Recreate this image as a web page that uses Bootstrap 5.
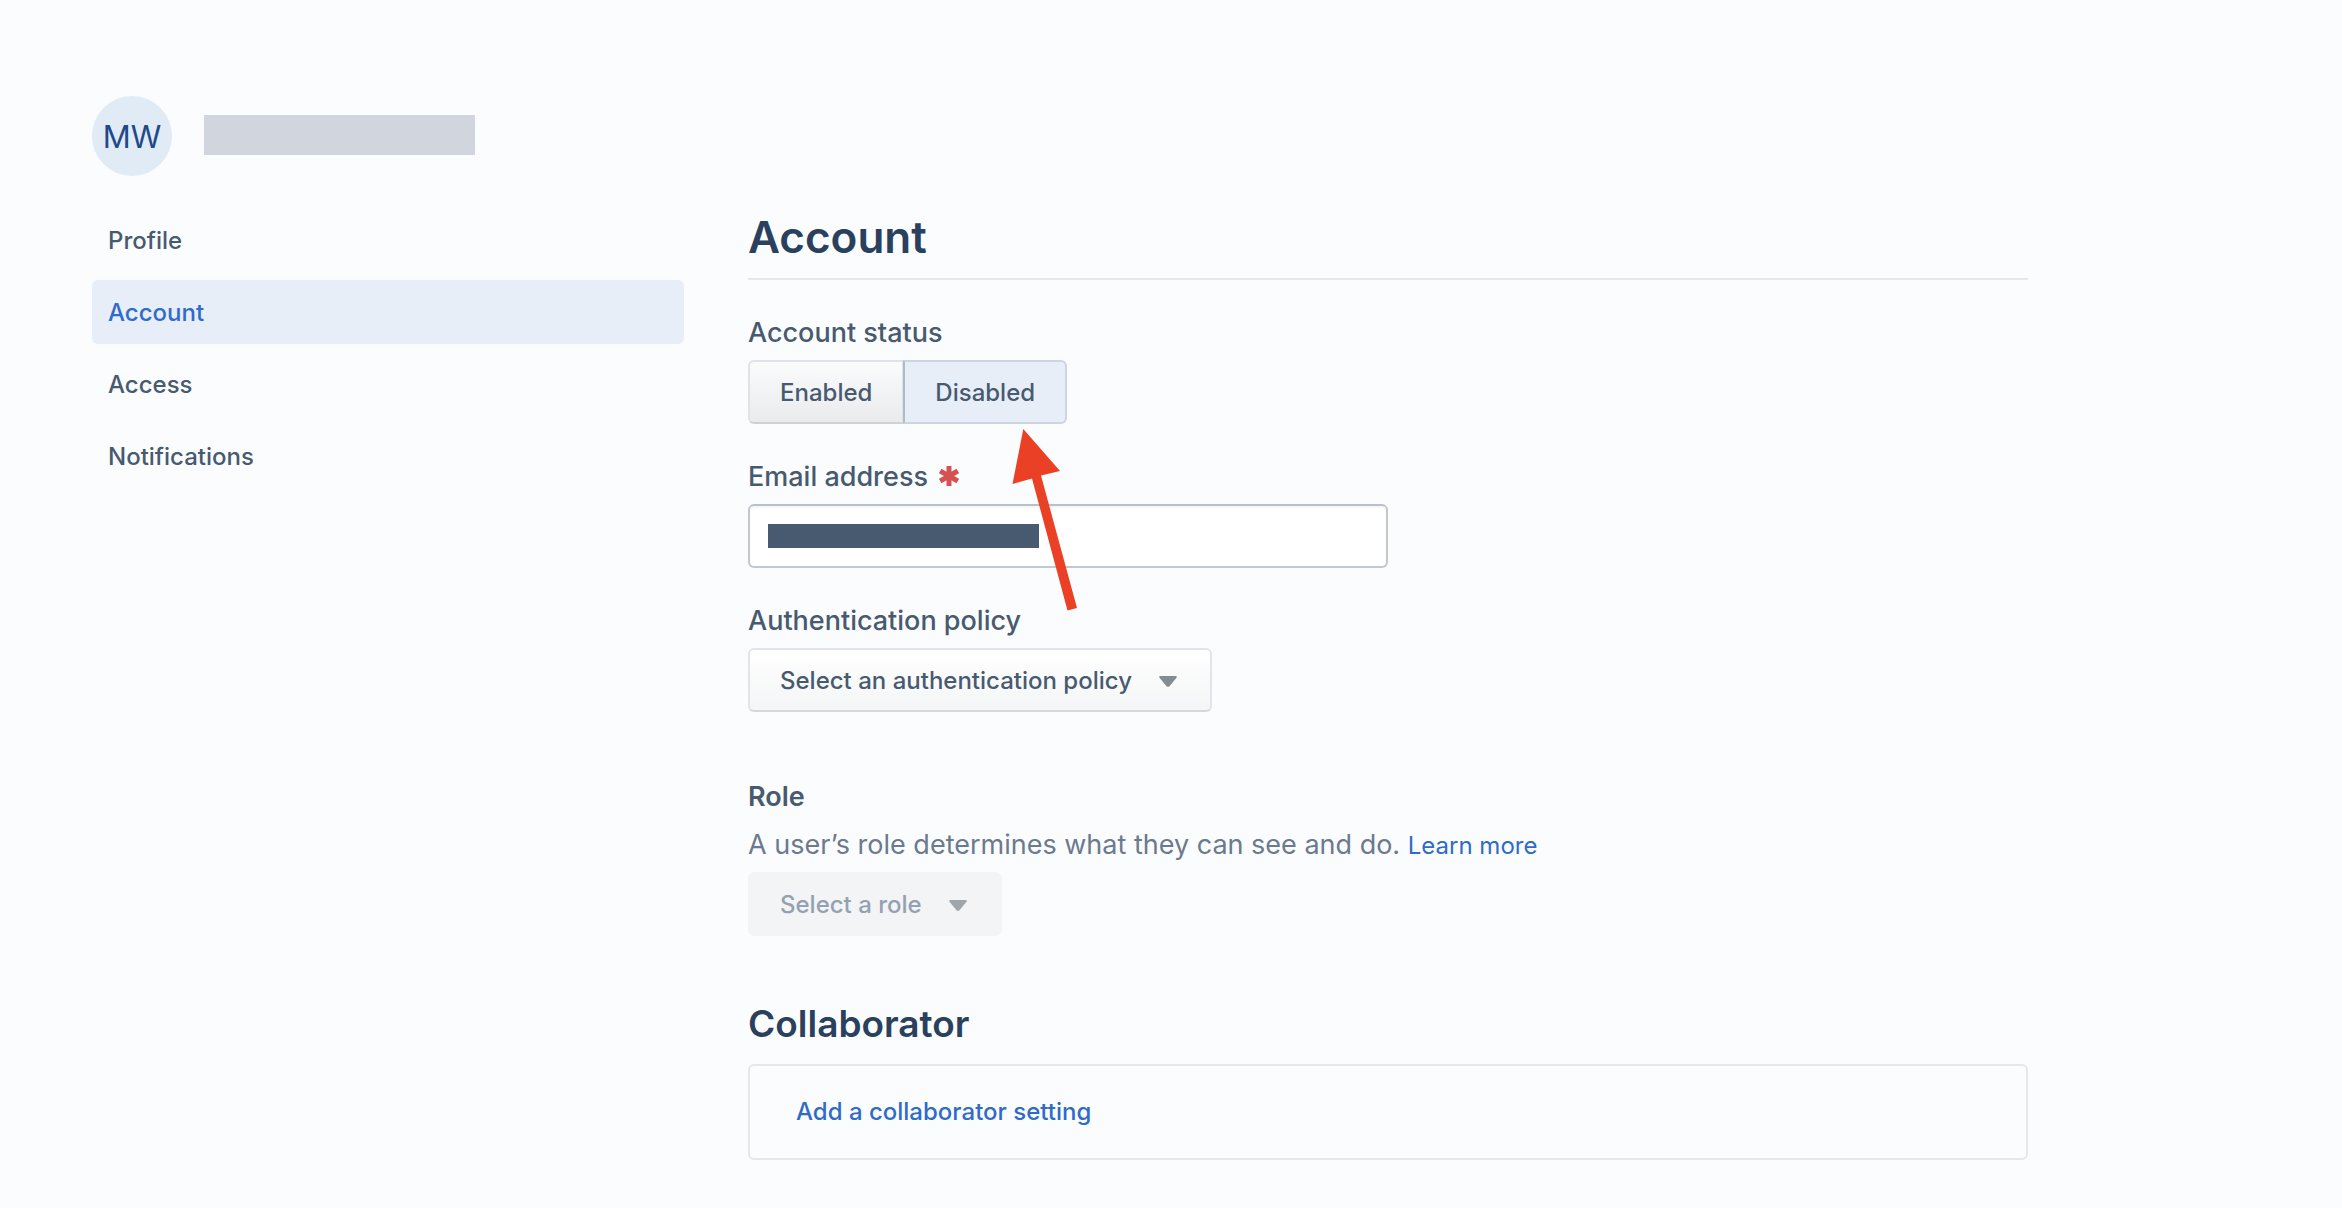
<!DOCTYPE html>
<html lang="en">
<head>
<meta charset="utf-8">
<meta name="viewport" content="width=device-width, initial-scale=1">
<title>Account</title>
<link href="https://cdn.jsdelivr.net/npm/bootstrap@5.3.0/dist/css/bootstrap.min.css" rel="stylesheet">
<style>
  body { background: #fbfcfe; color: #475a70; font-family: Inter, "Liberation Sans", sans-serif; font-size: 24px; line-height: 32px; }
  .settings { max-width: 2120px; padding: 96px 92px 48px; }
  .settings-grid { display: grid; grid-template-columns: minmax(0, 592fr) minmax(0, 1280fr); column-gap: 64px; margin-top: 32px; }
  .avatar { width: 80px; height: 80px; padding-top: 2px; background: #e0ebf6; color: #1f4a8a; font-size: 31px; }
  .name-bar { width: 271px; height: 40px; margin-bottom: 2px; background: #d1d6de; }
  .side-nav { gap: 8px; }
  .side-nav .nav-link { padding: 17px 16px 15px; border-radius: 6px; color: #475a70; font-weight: 500; }
  .side-nav .nav-link.active { background: #e8eef8; color: #2f6bc9; }
  h1, h2 { color: #2a415e; font-weight: 600; margin: 0; }
  h1 { font-size: 44px; line-height: 56px; padding: 1px 0 13px; border-bottom: 2px solid #e5e7ea; }
  h2 { font-size: 37px; line-height: 48px; margin-bottom: 16px; }
  .field { margin-top: 32px; }
  .section { margin-top: 64px; }
  .field-label { display: block; padding-top: 1px; margin-bottom: 7px; font-size: 27px; line-height: 40px; font-weight: 500; }
  .role-label { font-weight: 600; }
  .required-mark { margin-left: 4px; }
  .hint { padding-top: 1px; margin-bottom: 7px; font-size: 27px; line-height: 40px; color: #6b7a8e; }
  .hint a { font-size: 24px; line-height: 24px; }
  a { color: #2f6bc9; text-decoration: none; }
  .status-btn { --bs-btn-padding-x: 30px; --bs-btn-padding-y: 14px; --bs-btn-font-size: 24px; --bs-btn-line-height: 32px; --bs-btn-border-width: 2px; --bs-btn-border-radius: 6px;
    --bs-btn-color: #475a70; --bs-btn-font-weight: 500; --bs-btn-active-color: #475a70; --bs-btn-active-bg: #e8eef8; --bs-btn-active-border-color: #ccd5e2;
    padding-top: 15px; padding-bottom: 13px;
    border-color: #dfe2e6 #dfe2e6 #cdd1d6; background: linear-gradient(#fbfcfc, #e9eaec) border-box; }
  .btn-check:checked + .status-btn { background: #e8eef8; border-left-color: #afbac9; }
  .email-input { width: 50%; height: 64px; padding: 14px 18px; border: 2px solid #c1c8d0; border-top-color: #b8c1cb; border-radius: 6px;
    background: linear-gradient(#475a70, #475a70) 18px 18px / 271px 24px no-repeat #fff; box-shadow: inset 0 2px 2px #f3f5f7; }
  .pick { width: auto; height: 64px; padding: 15px 78px 13px 30px; border: 2px solid #e1e4e8; border-bottom-color: #d5d9de; border-radius: 6px;
    color: #475a70; font-size: 24px; line-height: 32px; font-weight: 500;
    background-color: #fff;
    background-image: url("data:image/svg+xml,%3Csvg xmlns='http://www.w3.org/2000/svg' viewBox='0 0 18 11'%3E%3Cpath d='M1.5 0h15q2 .3 1 1.7L10.500 10.200Q9 11.500 7.500 10.200L.5 1.700Q-.5.3 1.500 0z' fill='%23858d94'/%3E%3C/svg%3E"), linear-gradient(#fff, #f4f5f6);
    background-size: 18px 11px, 100% 100%; background-position: right 33px top 26px, 0 0; background-repeat: no-repeat; }
  .pick:disabled { color: #94a1b2; opacity: 1; border-color: #f3f4f6; background-color: #f3f4f6;
    background-image: url("data:image/svg+xml,%3Csvg xmlns='http://www.w3.org/2000/svg' viewBox='0 0 18 11'%3E%3Cpath d='M1.5 0h15q2 .3 1 1.7L10.500 10.200Q9 11.500 7.500 10.200L.5 1.700Q-.5.3 1.500 0z' fill='%239fa5aa'/%3E%3C/svg%3E"); background-size: 18px 11px; background-position: right 33px top 26px; }
  .pointer { position: absolute; left: 264px; top: calc(100% + 5px); z-index: 2; pointer-events: none; }
  .panel { padding: 30px 46px; border: 2px solid #e5e7ea; border-radius: 6px; font-weight: 500; }
</style>
<script src="https://cdn.jsdelivr.net/npm/bootstrap@5.3.0/dist/js/bootstrap.bundle.min.js"></script>
</head>
<body>
<div class="settings">
  <header class="d-flex align-items-center">
    <div class="avatar rounded-circle d-flex align-items-center justify-content-center me-3">MW</div>
    <div class="name-bar ms-3"></div>
  </header>
  <div class="settings-grid">
    <nav class="side-nav nav flex-column" aria-label="User settings">
      <a class="nav-link" href="#">Profile</a>
      <a class="nav-link active" aria-current="page" href="#">Account</a>
      <a class="nav-link" href="#">Access</a>
      <a class="nav-link" href="#">Notifications</a>
    </nav>
    <main>
      <h1>Account</h1>
      <div class="field position-relative">
        <div class="field-label" id="status-label">Account status</div>
        <div class="btn-group d-inline-flex align-top" role="group" aria-labelledby="status-label">
          <input type="radio" class="btn-check" name="status" id="enabled">
          <label class="btn status-btn" for="enabled">Enabled</label>
          <input type="radio" class="btn-check" name="status" id="disabled" checked>
          <label class="btn status-btn" for="disabled">Disabled</label>
        </div>
        <svg class="pointer" width="66" height="182" viewBox="0 0 66 182" aria-hidden="true"><path d="M11.300 0L48 42L29 46.500L65 179L55.500 181.500L20 49.500L.5 55z" fill="#ea4025"/></svg>
      </div>
      <div class="field">
        <label class="field-label" for="email">Email address
          <svg width="20" height="20" viewBox="0 0 20 20" class="required-mark align-baseline" aria-hidden="true"><path d="M10 0v20M1.200 5l17.600 10M1.200 15L18.800 5" stroke="#d65252" stroke-width="5"/></svg>
        </label>
        <input class="email-input d-block" type="email" id="email" required>
      </div>
      <div class="field">
        <label class="field-label" for="policy">Authentication policy</label>
        <select class="form-select pick d-block" id="policy"><option>Select an authentication policy</option></select>
      </div>
      <div class="section">
        <label class="field-label role-label" for="role">Role</label>
        <p class="hint">A user’s role determines what they can see and do. <a href="#">Learn more</a></p>
        <select class="form-select pick d-block" id="role" disabled><option>Select a role</option></select>
      </div>
      <section class="section">
        <h2>Collaborator</h2>
        <div class="panel"><a href="#">Add a collaborator setting</a></div>
      </section>
    </main>
  </div>
</div>
</body>
</html>
